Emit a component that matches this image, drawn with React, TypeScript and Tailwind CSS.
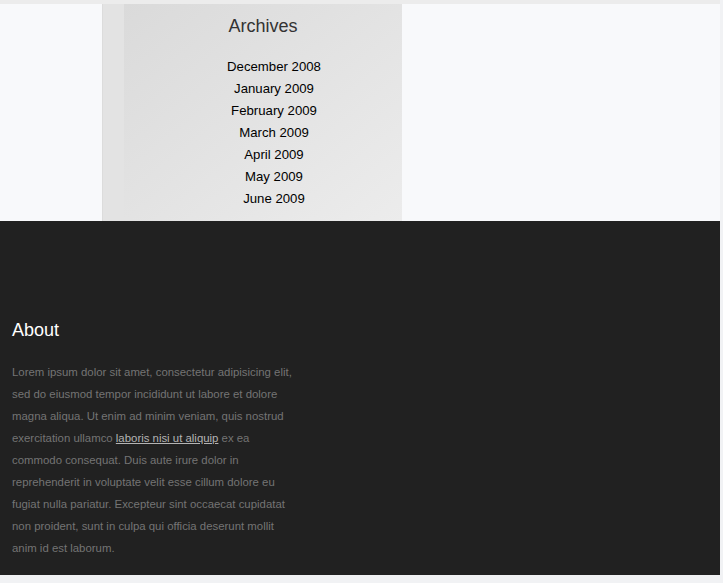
import React from "react";

const archives = [
	"December 2008",
	"January 2009",
	"February 2009",
	"March 2009",
	"April 2009",
	"May 2009",
	"June 2009",
];

const Sidebar = () => {
	return (
		<div className="ml-[102px] flex h-full w-[300px]">
			<div className="w-[22px] border-l border-[#dcdcdc] bg-[#e3e3e3]" />
			<div className="flex-1 bg-gradient-to-br from-[#dadada] to-[#ececec]">
				<h2 className="pt-[11px] text-center text-[18px] leading-[22px] text-[#333]">
					Archives
				</h2>
				<ul className="mt-[19px] pl-[22px] text-center text-[13.2px] leading-[22px] text-black">
					{archives.map((month) => (
						<li key={month}>
							<a href="#">{month}</a>
						</li>
					))}
				</ul>
			</div>
		</div>
	);
};

const About = () => {
	return (
		<div className="px-3 pt-[98px]">
			<h3 className="text-[18px] leading-[22px] text-white">About</h3>
			<p className="mt-[20px] w-[284px] text-[11.4px] leading-[22px] text-[#747474]">
				Lorem ipsum dolor sit amet, consectetur adipisicing elit, sed do
				eiusmod tempor incididunt ut labore et dolore magna aliqua. Ut enim
				ad minim veniam, quis nostrud exercitation ullamco{" "}
				<a href="#" className="text-[#b4b4b4] underline">
					laboris nisi ut aliquip
				</a>{" "}
				ex ea commodo consequat. Duis aute irure dolor in reprehenderit in
				voluptate velit esse cillum dolore eu fugiat nulla pariatur.
				Excepteur sint occaecat cupidatat non proident, sunt in culpa qui
				officia deserunt mollit anim id est laborum.
			</p>
		</div>
	);
};

export default function App() {
	return (
		<div className="min-h-[583px] bg-[#f1f2f4] font-['Liberation_Sans',Arial,sans-serif]">
			<div className="h-[4px] w-[720px] bg-[#ececec]" />
			<div className="h-[217px] w-[720px] bg-[#f8f9fb]">
				<Sidebar />
			</div>
			<footer className="h-[354px] w-[720px] bg-[#212121]">
				<About />
			</footer>
		</div>
	);
}
